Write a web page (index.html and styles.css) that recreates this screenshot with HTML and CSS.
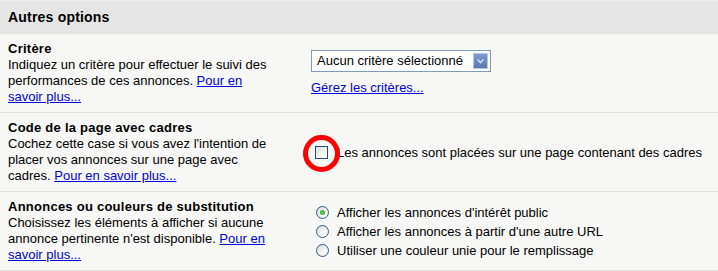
FILE: index.html
```html
<!DOCTYPE html>
<html lang="fr">
<head>
<meta charset="utf-8">
<title>Autres options</title>
<link rel="stylesheet" href="styles.css">
</head>
<body>
<div class="panel">
  <div class="panel-header">Autres options</div>

  <div class="row">
    <div class="info">
      <div class="title">Critère</div>
      <div class="desc">Indiquez un critère pour effectuer le suivi des performances de ces annonces. <a href="#">Pour en savoir plus...</a></div>
    </div>
    <div class="control">
      <div class="fake-select">
        <span class="fake-select-text">Aucun critère sélectionné</span>
        <span class="fake-select-btn">
          <svg width="15" height="16" viewBox="0 0 15 16">
            <defs>
              <linearGradient id="btng" x1="0" y1="0" x2="0" y2="1">
                <stop offset="0" stop-color="#7f9bd0"/>
                <stop offset="1" stop-color="#5a77ae"/>
              </linearGradient>
            </defs>
            <rect x="0.5" y="0.5" width="14" height="15" fill="url(#btng)" stroke="#b6c7e6"/>
            <path d="M4.5 6.5 L7.5 9.5 L10.5 6.5" fill="none" stroke="#d4def1" stroke-width="1.6"/>
          </svg>
        </span>
      </div>
      <a href="#" class="manage">Gérez les critères...</a>
    </div>
  </div>

  <div class="row">
    <div class="info">
      <div class="title">Code de la page avec cadres</div>
      <div class="desc">Cochez cette case si vous avez l'intention de placer vos annonces sur une page avec cadres. <a href="#">Pour en savoir plus...</a></div>
    </div>
    <div class="control">
      <label class="option">
        <span class="check-wrap">
          <span class="checkbox"></span>
          <span class="highlight"></span>
        </span>
        <span>Les annonces sont placées sur une page contenant des cadres</span>
      </label>
    </div>
  </div>

  <div class="row">
    <div class="info">
      <div class="title">Annonces ou couleurs de substitution</div>
      <div class="desc">Choisissez les éléments à afficher si aucune annonce pertinente n'est disponible. <a href="#">Pour en savoir plus...</a></div>
    </div>
    <div class="control radios">
      <label class="option"><span class="radio checked"></span><span>Afficher les annonces d'intérêt public</span></label>
      <label class="option"><span class="radio"></span><span>Afficher les annonces à partir d'une autre URL</span></label>
      <label class="option"><span class="radio"></span><span>Utiliser une couleur unie pour le remplissage</span></label>
    </div>
  </div>
</div>
</body>
</html>
```

FILE: styles.css
```css
html, body {
  margin: 0;
  padding: 0;
  background: #f7f7f5;
}

body {
  font-family: "Liberation Sans", Arial, sans-serif;
  font-size: 13px;
  color: #000;
  width: 718px;
  height: 271px;
  overflow: hidden;
}

.panel {
  display: flex;
  flex-direction: column;
}

.panel-header {
  height: 33px;
  border-top: 1px solid #ededed;
  background: #e5e5e5;
  font-weight: bold;
  font-size: 14px;
  letter-spacing: 0.2px;
  line-height: 33px;
  padding-left: 8px;
}

.row {
  display: flex;
  align-items: center;
  background: #f7f7f5;
  padding: 7px 0 7px 8px;
  height: 64px;
  border-bottom: 1px solid #e0e0e0;
}

.info {
  width: 272px;
  line-height: 16px;
}

.title {
  font-weight: bold;
  letter-spacing: 0.25px;
}

a {
  color: #0000dd;
  text-decoration: underline;
}

.control {
  margin-left: 31px;
  display: flex;
  flex-direction: column;
  align-items: flex-start;
}

.fake-select {
  width: 178px;
  height: 20px;
  border: 1px solid #7f9db9;
  background: #fff;
  display: flex;
  align-items: center;
  justify-content: space-between;
}

.fake-select-text {
  padding-left: 5px;
  line-height: 20px;
}

.fake-select-btn {
  display: flex;
  margin-right: 2px;
}

.manage {
  margin-top: 8px;
  line-height: 16px;
}

.option {
  display: flex;
  align-items: center;
  line-height: 19px;
}

.check-wrap {
  position: relative;
  width: 13px;
  height: 13px;
  margin-left: 4px;
  margin-right: 9px;
  display: inline-block;
}

.checkbox {
  display: block;
  width: 11px;
  height: 11px;
  border: 1px solid #1c5180;
  background: linear-gradient(135deg, #dcdcd6 0%, #f4f4f2 60%, #ffffff 100%);
}

.highlight {
  position: absolute;
  left: -12px;
  top: -11px;
  width: 27px;
  height: 27px;
  border: 5px solid #ff0000;
  border-radius: 50%;
}

.radios {
  margin-left: 36px;
}

.radio {
  width: 11px;
  height: 11px;
  border: 1px solid #2f5f8f;
  border-radius: 50%;
  background: radial-gradient(circle at 65% 70%, #ffffff 0%, #e8e8e4 60%, #cfd3d6 100%);
  margin-right: 8px;
  position: relative;
  flex: none;
}

.radio.checked::after {
  content: "";
  position: absolute;
  left: 3px;
  top: 3px;
  width: 5px;
  height: 5px;
  border-radius: 50%;
  background: radial-gradient(circle, #5ed35e 0%, #2ba12b 100%);
}
```
